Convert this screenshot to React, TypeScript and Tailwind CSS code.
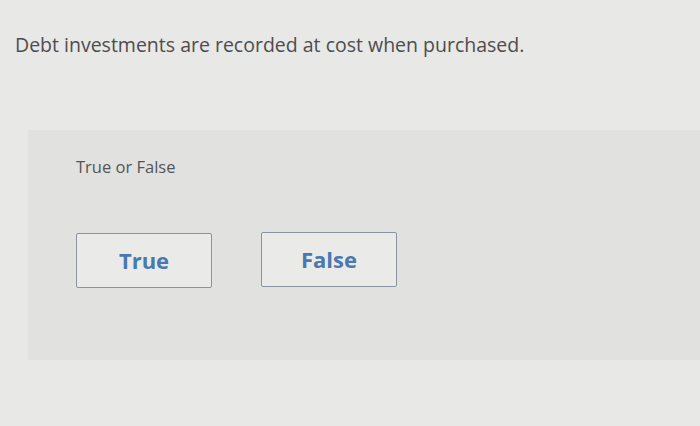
export default function App() {
  return (
    <div className="w-[700px] h-[426px] overflow-hidden bg-[#e8e8e6] flex flex-col" style={{ fontFamily: '"Open Sans", "Lato", sans-serif' }}>
      <div className="pl-[15px] pt-[31px] text-[19.5px] leading-[27px] text-[#4d4d4f]">
        Debt investments are recorded at cost when purchased.
      </div>
      <div className="ml-[28px] mt-[72px] h-[230px] bg-[#e1e1df] pl-[48px] pt-[25px]">
        <div className="text-[16.5px] leading-[24px] text-[#555557]">True or False</div>
        <div className="flex gap-[49px] mt-[54px]">
          <div className="w-[136px] h-[55px] border-[1.5px] border-[#8b93a3] rounded-[2px] bg-[#eaeae8] flex items-center justify-center text-[22px] font-bold text-[#4a78b0]">True</div>
          <div className="w-[136px] h-[55px] -mt-px border-[1.5px] border-[#8b93a3] rounded-[2px] bg-[#eaeae8] flex items-center justify-center text-[22px] font-bold text-[#4a78b0]">False</div>
        </div>
      </div>
    </div>
  );
}
